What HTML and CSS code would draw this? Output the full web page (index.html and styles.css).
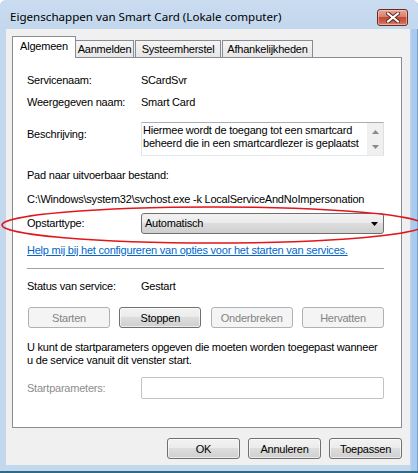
FILE: index.html
```html
<!DOCTYPE html>
<html>
<head>
<meta charset="utf-8">
<link rel="stylesheet" href="styles.css">
</head>
<body>
<div class="window">
  <div class="titlebar">
    <span class="title">Eigenschappen van Smart Card (Lokale computer)</span>
    <div class="close">
      <svg width="14" height="11" viewBox="0 0 14 11"><path d="M2 1.5 L12 9.5 M12 1.5 L2 9.5" stroke="#5a2a22" stroke-width="4" stroke-linecap="square"/><path d="M2 1.5 L12 9.5 M12 1.5 L2 9.5" stroke="#ffffff" stroke-width="2" stroke-linecap="square"/></svg>
    </div>
  </div>
  <div class="client">
    <div class="tabs">
      <div class="tab selected">Algemeen</div>
      <div class="tab t2">Aanmelden</div>
      <div class="tab t3">Systeemherstel</div>
      <div class="tab t4">Afhankelijkheden</div>
    </div>
    <div class="panel">
      <div class="row r1"><span class="lbl">Servicenaam:</span><span>SCardSvr</span></div>
      <div class="row r2"><span class="lbl">Weergegeven naam:</span><span>Smart Card</span></div>
      <div class="row r3">
        <span class="lbl lbl-desc">Beschrijving:</span>
        <div class="desc">
          <div class="desc-text">Hiermee wordt de toegang tot een smartcard beheerd die in een smartcardlezer is geplaatst</div>
          <div class="vscroll">
            <svg width="7" height="4" viewBox="0 0 7 4"><path d="M0 4 L3.5 0 L7 4Z" fill="#8a8a8a"/></svg>
            <svg width="7" height="4" viewBox="0 0 7 4"><path d="M0 0 L3.5 4 L7 0Z" fill="#8a8a8a"/></svg>
          </div>
        </div>
      </div>
      <div class="row r4">Pad naar uitvoerbaar bestand:</div>
      <div class="row r5">C:\Windows\system32\svchost.exe -k LocalServiceAndNoImpersonation</div>
      <div class="row r6">
        <span class="lbl">Opstarttype:</span>
        <div class="combo"><span>Automatisch</span><svg width="7" height="4" viewBox="0 0 7 4"><path d="M0 0 L7 0 L3.5 4Z" fill="#000"/></svg></div>
      </div>
      <a class="link" href="#">Help mij bij het configureren van opties voor het starten van services.</a>
      <div class="sep"></div>
      <div class="row r7"><span class="lbl">Status van service:</span><span>Gestart</span></div>
      <div class="btnrow">
        <button class="btn disabled">Starten</button>
        <button class="btn">Stoppen</button>
        <button class="btn disabled">Onderbreken</button>
        <button class="btn disabled">Hervatten</button>
      </div>
      <p class="para">U kunt de startparameters opgeven die moeten worden toegepast wanneer<br>u de service vanuit dit venster start.</p>
      <div class="row r8"><span class="lbl grey">Startparameters:</span><div class="input"></div></div>
    </div>
    <div class="footer">
      <button class="btn fbtn">OK</button>
      <button class="btn fbtn">Annuleren</button>
      <button class="btn fbtn">Toepassen</button>
    </div>
  </div>
  <svg class="annot" width="418" height="60" viewBox="0 0 418 60"><ellipse cx="213" cy="27" rx="211" ry="18" fill="none" stroke="#e3161c" stroke-width="1.6"/></svg>
</div>
</body>
</html>
```
FILE: styles.css
```css
html, body { margin: 0; padding: 0; }
body {
  font-family: "Liberation Sans", Arial, sans-serif;
  font-size: 11px;
  line-height: 13px;
  letter-spacing: -0.22px;
  color: #000;
  background: #fff;
}
.window {
  position: relative;
  width: 418px;
  height: 473px;
  box-sizing: border-box;
  display: flex;
  flex-direction: column;
  padding: 0 8px 8px 6px;
  border-radius: 6px 6px 0 0;
  background: linear-gradient(90deg, #c3d7ed 0, #c3d7ed 410px, #a8cbef 412px, #a8cbef 417px, #7d9fc2 417px);
  box-shadow: inset 0 -2px 0 #2f6b86;
}
.titlebar {
  height: 29px;
  display: flex;
  align-items: flex-start;
  justify-content: space-between;
  background: linear-gradient(#c9dcf0, #c3d7ed);
  margin: 0 -8px 0 -6px;
  padding: 0 10px 0 10px;
  border-radius: 6px 6px 0 0;
}
.title {
  font-family: "Noto Sans", "Open Sans", sans-serif;
  font-size: 11.6px;
  line-height: 16px;
  letter-spacing: 0;
  margin-top: 9px;
  color: #000;
}
.close {
  width: 29px;
  height: 15px;
  margin-top: 9px;
  border: 1px solid #6b2b24;
  border-radius: 3px;
  background: linear-gradient(#e8a595 0, #d8806c 45%, #c24a36 50%, #c9614b 80%, #dc8a72 100%);
  display: flex;
  align-items: center;
  justify-content: center;
  box-shadow: inset 0 0 0 1px rgba(255,220,210,0.5);
}
.client {
  flex: 1;
  background: #f0f0f0;
  padding: 7px 8px 0 6px;
  display: flex;
  flex-direction: column;
}
.tabs {
  display: flex;
  align-items: flex-end;
  height: 21px;
}
.tab {
  box-sizing: border-box;
  height: 17px;
  border: 1px solid #898c95;
  border-bottom: none;
  background: linear-gradient(#f5f5f5, #e6e6e6);
  text-align: center;
  line-height: 16px;
  padding: 0;
  white-space: nowrap;
}
.tab.selected {
  height: 22px;
  width: 64px;
  margin-bottom: -1px;
  background: #fff;
  position: relative;
  z-index: 1;
  line-height: 18px;
}
.t2 { width: 59px; margin-left: -1px; }
.t3 { width: 86px; margin-left: 1px; }
.t4 { width: 91px; margin-left: 1px; }
.panel {
  box-sizing: border-box;
  height: 371px;
  border: 1px solid #898c95;
  background: #fff;
  padding: 16px 17px 0 14px;
  display: flex;
  flex-direction: column;
  align-items: stretch;
}
.row { display: flex; align-items: flex-start; white-space: nowrap; }
.lbl { width: 114px; flex: none; }
.r2 { margin-top: 9px; }
.r3 { margin-top: 13px; }
.lbl-desc { margin-top: 6px; }
.desc {
  flex: 1;
  box-sizing: border-box;
  height: 34px;
  border: 1px solid #abadb3;
  border-color: #abadb3 #dbdfe6 #e3e9ef #e2e3ea;
  display: flex;
}
.desc-text {
  flex: 1;
  padding: 1px 0 0 1px;
  white-space: normal;
}
.vscroll {
  width: 16px;
  background: #f0f0f0;
  display: flex;
  flex-direction: column;
  align-items: center;
  justify-content: space-around;
  padding: 1px 0;
}
.r4 { margin-top: 13px; }
.r5 { margin-top: 11px; }
.r6 { margin-top: 7px; align-items: center; }
.combo {
  flex: 1;
  box-sizing: border-box;
  height: 21px;
  border: 1px solid #707070;
  border-radius: 3px;
  background: linear-gradient(#f2f2f2 0, #ebebeb 50%, #dddddd 50%, #cfcfcf 100%);
  display: flex;
  align-items: center;
  justify-content: space-between;
  padding: 0 5px 0 3px;
}
.link {
  margin-top: 10px;
  color: #0066cc;
  text-decoration: underline;
  align-self: flex-start;
  white-space: nowrap;
}
.sep {
  margin-top: 11px;
  height: 1px;
  background: #a0a0a0;
}
.r7 { margin-top: 11px; }
.btnrow {
  margin-top: 14px;
  display: flex;
  justify-content: space-between;
  padding-left: 1px;
}
.btn {
  box-sizing: border-box;
  width: 82px;
  height: 21px;
  font-family: "Liberation Sans", Arial, sans-serif;
  font-size: 11px;
  letter-spacing: -0.22px;
  color: #000;
  border: 1px solid #707070;
  border-radius: 3px;
  background: linear-gradient(#f2f2f2 0, #ebebeb 50%, #dddddd 50%, #cfcfcf 100%);
  padding: 0;
  margin: 0;
  box-shadow: inset 0 0 0 1px rgba(255,255,255,0.6);
}
.btn.disabled {
  color: #838383;
  border-color: #adb2b5;
  background: #f4f4f4;
  box-shadow: none;
}
.para { margin: 13px 0 0 0; white-space: nowrap; }
.r8 { margin-top: 10px; align-items: center; }
.grey { color: #8d8d8d; }
.input {
  flex: 1;
  box-sizing: border-box;
  height: 22px;
  border: 1px solid #c2c3c9;
  border-radius: 2px;
  background: #fff;
}
.footer {
  display: flex;
  justify-content: flex-end;
  gap: 8px;
  padding-top: 10px;
}
.fbtn { width: 73px; }
.annot {
  position: absolute;
  left: 0;
  top: 198px;
  pointer-events: none;
}
```
